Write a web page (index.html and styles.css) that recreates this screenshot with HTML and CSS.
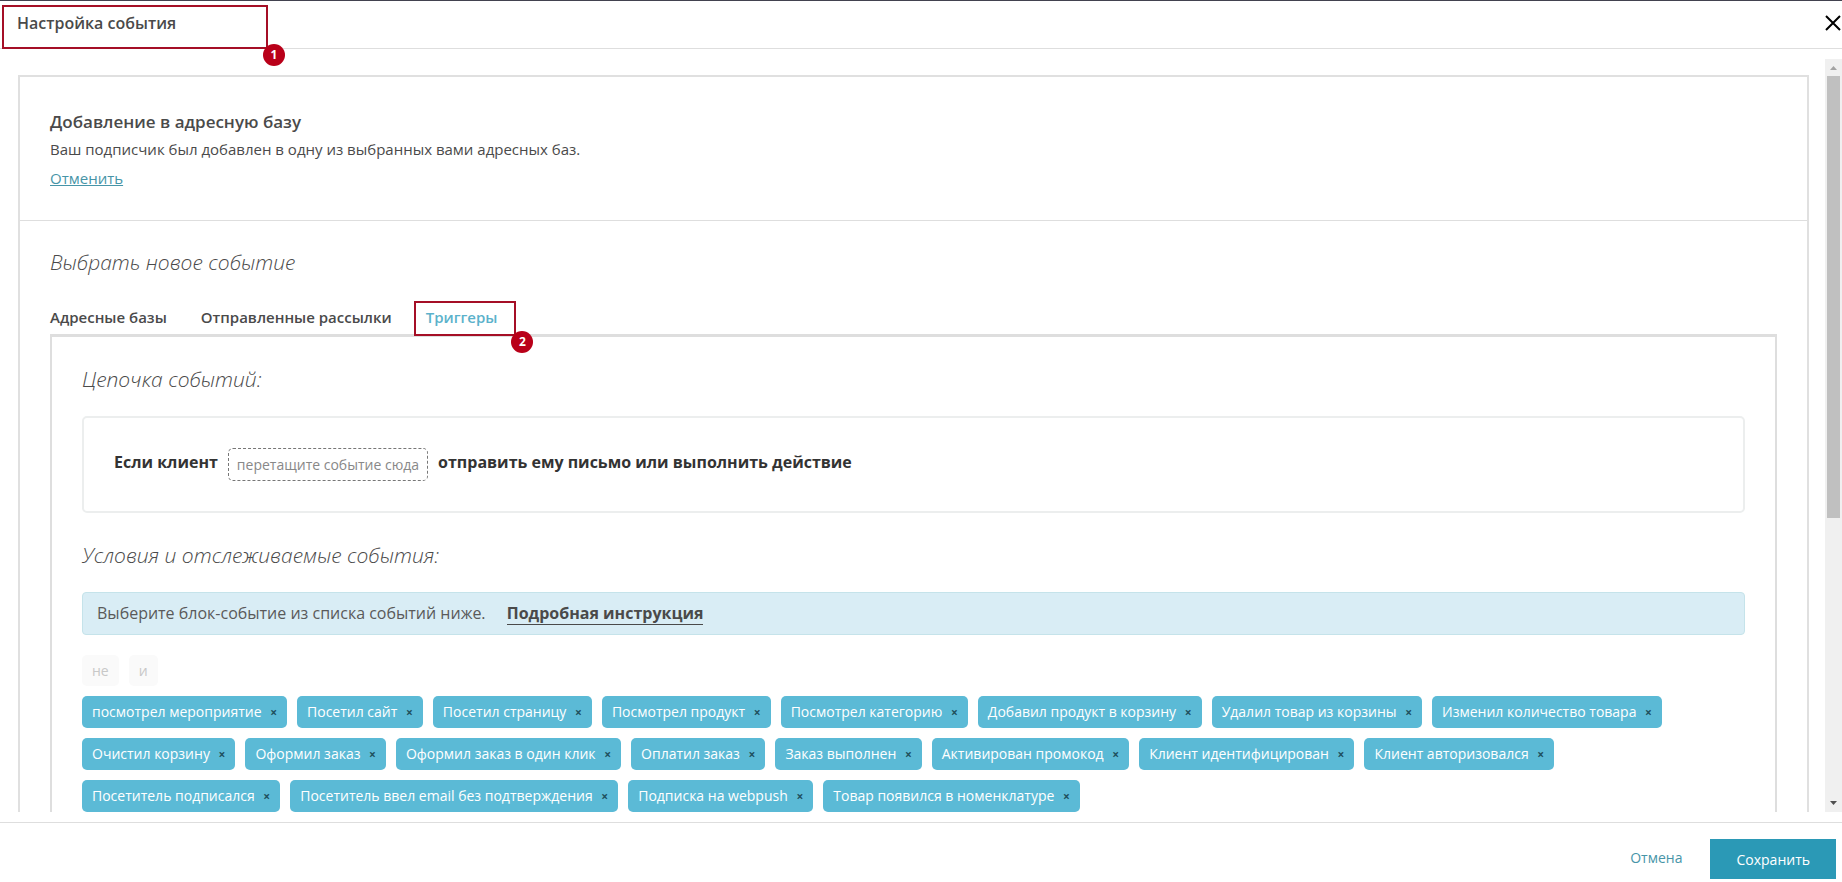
FILE: index.html
```html
<!DOCTYPE html>
<html lang="ru">
<head>
<meta charset="utf-8">
<title>Настройка события</title>
<link rel="stylesheet" href="styles.css">
</head>
<body>
<div class="dialog">
  <header class="dialog-header">
    <h1 class="dialog-title">Настройка события</h1>
    <div class="mark mark-title"><span class="mark-number">1</span></div>
    <button class="close" type="button" aria-label="Закрыть">
      <svg viewBox="0 0 16 16" width="16" height="16"><path d="M1 1 15 15M15 1 1 15" fill="none" stroke="#000" stroke-width="2"/></svg>
    </button>
  </header>

  <div class="dialog-body">
    <main class="content">
      <div class="panel">
        <section class="current">
          <h2 class="current-title">Добавление в адресную базу</h2>
          <p class="current-text">Ваш подписчик был добавлен в одну из выбранных вами адресных баз.</p>
          <a class="current-cancel" href="#">Отменить</a>
        </section>
        <section class="choose">
          <h2 class="heading">Выбрать новое событие</h2>
          <div class="tabs" role="tablist">
            <button class="tab" type="button" role="tab">Адресные базы</button>
            <button class="tab" type="button" role="tab">Отправленные рассылки</button>
            <div class="tab-marked">
              <button class="tab tab-active" type="button" role="tab" aria-selected="true">Триггеры</button>
              <div class="mark mark-tab"><span class="mark-number">2</span></div>
            </div>
          </div>
          <div class="tab-panel" role="tabpanel">
            <h3 class="heading">Цепочка событий:</h3>
            <div class="chain">
              <span>Если клиент</span>
              <span class="drop">перетащите событие сюда</span>
              <span>отправить ему письмо или выполнить действие</span>
            </div>
            <h3 class="heading">Условия и отслеживаемые события:</h3>
            <p class="alert">Выберите блок-событие из списка событий ниже. <a class="alert-link" href="#">Подробная инструкция</a></p>
            <div class="tags operators">
              <button class="operator" type="button" disabled>не</button>
              <button class="operator" type="button" disabled>и</button>
            </div>
            <div class="tags">
              <button class="tag" type="button">посмотрел мероприятие <span class="x">×</span></button>
              <button class="tag" type="button">Посетил сайт <span class="x">×</span></button>
              <button class="tag" type="button">Посетил страницу <span class="x">×</span></button>
              <button class="tag" type="button">Посмотрел продукт <span class="x">×</span></button>
              <button class="tag" type="button">Посмотрел категорию <span class="x">×</span></button>
              <button class="tag" type="button">Добавил продукт в корзину <span class="x">×</span></button>
              <button class="tag" type="button">Удалил товар из корзины <span class="x">×</span></button>
              <button class="tag" type="button">Изменил количество товара <span class="x">×</span></button>
              <button class="tag" type="button">Очистил корзину <span class="x">×</span></button>
              <button class="tag" type="button">Оформил заказ <span class="x">×</span></button>
              <button class="tag" type="button">Оформил заказ в один клик <span class="x">×</span></button>
              <button class="tag" type="button">Оплатил заказ <span class="x">×</span></button>
              <button class="tag" type="button">Заказ выполнен <span class="x">×</span></button>
              <button class="tag" type="button">Активирован промокод <span class="x">×</span></button>
              <button class="tag" type="button">Клиент идентифицирован <span class="x">×</span></button>
              <button class="tag" type="button">Клиент авторизовался <span class="x">×</span></button>
              <button class="tag" type="button">Посетитель подписался <span class="x">×</span></button>
              <button class="tag" type="button">Посетитель ввел email без подтверждения <span class="x">×</span></button>
              <button class="tag" type="button">Подписка на webpush <span class="x">×</span></button>
              <button class="tag" type="button">Товар появился в номенклатуре <span class="x">×</span></button>
            </div>
          </div>
        </section>
      </div>
    </main>
    <div class="scrollbar" aria-hidden="true">
      <svg class="arrow" viewBox="0 0 17 17"><path d="M5 11h7L8.500 7z" fill="#a3a3a3"/></svg>
      <div class="track"><div class="thumb"></div></div>
      <svg class="arrow" viewBox="0 0 17 17"><path d="M5 6h7L8.500 10z" fill="#505050"/></svg>
    </div>
  </div>

  <footer class="dialog-footer">
    <button class="cancel" type="button">Отмена</button>
    <button class="save" type="button">Сохранить</button>
  </footer>
</div>
</body>
</html>
```
FILE: styles.css
```css
* { box-sizing: border-box; }
body {
  margin: 0;
  background: #fff;
  color: #4a4a4a;
  font: 15px/28px "Open Sans", "Noto Sans", sans-serif;
}
h1, h2, h3, p { margin: 0; }
button { border: 0; padding: 0; background: none; color: inherit; font: inherit; cursor: pointer; }

.dialog { display: flex; flex-direction: column; height: 100vh; border-top: 1px solid #42424f; }

.dialog-header {
  position: relative;
  display: flex;
  align-items: center;
  justify-content: space-between;
  flex: none;
  padding: 8px 1px 11px 17px;
  border-bottom: 1px solid #dedede;
}
.dialog-title { font-size: 16px; font-weight: 600; line-height: 28px; }
.close { display: flex; }

.mark { position: absolute; border: 2px solid #a50f26; pointer-events: none; }
.mark-title { left: 2px; top: 4px; bottom: -1px; width: 266px; }
.mark-tab { left: -12px; right: -19px; top: -1px; bottom: -2px; }
.mark-number {
  position: absolute;
  right: -19px;
  bottom: -19px;
  width: 22px;
  height: 22px;
  border-radius: 50%;
  background: #b90019;
  color: #fff;
  font-size: 12px;
  font-weight: 700;
  line-height: 22px;
  text-align: center;
}

.dialog-body { display: flex; flex: 1; min-height: 0; margin: 10px 0; }
.content { flex: 1; min-width: 0; overflow: hidden; padding: 16px 16px 0 18px; }
.panel { border: 2px solid #e0e0e0; }
.current { padding: 31px 30px 28px; border-bottom: 1px solid #dedede; }
.current-title { font-size: 17px; font-weight: 600; line-height: 28px; }
.current-text { padding-bottom: 2px; line-height: 26px; }
.current-cancel { color: #4795a8; }

.choose { padding: 27px 30px 40px; }
.heading { margin-bottom: 23px; font-size: 21px; font-style: italic; font-weight: 300; line-height: 28px; }
.tabs { display: flex; gap: 34px; margin-top: 26px; }
.tab { padding-bottom: 2px; font-weight: 600; line-height: 30px; }
.tab-active { color: #5bb2cb; }
.tab-marked { position: relative; display: flex; }

.tab-panel { padding: 28px 30px 30px; border: 2px solid #dedede; border-top-width: 3px; }
.chain {
  display: flex;
  align-items: flex-start;
  gap: 10px;
  margin-bottom: 28px;
  padding: 30px;
  border: 2px solid #eceeee;
  border-radius: 5px;
  color: #333;
  font-size: 16px;
  font-weight: 700;
}
.drop {
  padding: 2px 8px 1px;
  border: 1px dashed #777;
  border-radius: 5px;
  color: #888;
  font-size: 14px;
  font-weight: 400;
}
.alert {
  margin-bottom: 20px;
  padding: 6px 14px 7px;
  border: 1px solid #c5e3ea;
  border-radius: 4px;
  background: #d9edf5;
  color: #5a5a5a;
  font-size: 16px;
}
.alert-link {
  margin-left: 17px;
  border-bottom: 1px solid #4a4a4a;
  color: #4a4a4a;
  font-weight: 700;
  text-decoration: none;
}

.tags { display: flex; flex-wrap: wrap; gap: 10px; font-size: 14px; }
.operators { margin-bottom: 10px; }
.operator { padding: 2px 10px 1px; border-radius: 5px; background: #fafafa; color: #c8c8c8; }
.tag { height: 32px; padding: 0 10px; border-radius: 5px; background: #5bbad6; color: #fff; }
.x { margin-left: 5px; color: #20505e; font-size: 12px; font-weight: 700; line-height: 20px; }

.scrollbar { display: flex; flex-direction: column; flex: none; width: 17px; background: #f0f0f0; }
.arrow { flex: none; width: 17px; height: 17px; }
.track { flex: 1; padding: 0 2px; }
.thumb { height: 61.500%; background: #c0c0c0; }

.dialog-footer {
  display: flex;
  align-items: center;
  justify-content: flex-end;
  gap: 28px;
  flex: none;
  padding: 16px 6px 3px;
  border-top: 1px solid #dedede;
}
.cancel { padding-bottom: 2px; color: #4795a8; font-size: 14px; }
.save { padding: 7px 26px 5px; background: #2b99b6; color: #fff; font-size: 14px; }
```
